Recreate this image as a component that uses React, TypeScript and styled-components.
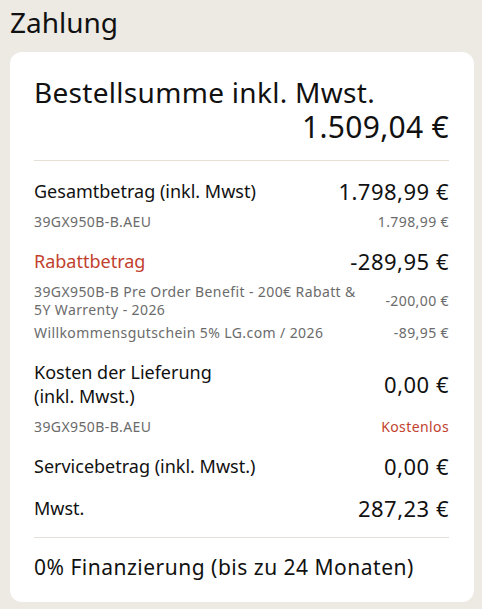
import React from "react";
import styled, { createGlobalStyle } from "styled-components";

const GlobalStyle = createGlobalStyle`
  html, body {
    margin: 0;
    padding: 0;
    background: #edeae4;
  }
  body {
    font-family: "Noto Sans", "Open Sans", sans-serif;
    color: #111;
  }
`;

const Page = styled.div`
  padding: 5px 8px 9px 10px;
`;

const Heading = styled.h2`
  margin: 0 0 13px;
  font-size: 28px;
  line-height: 34px;
  font-weight: 400;
`;

const Card = styled.section`
  background: #fff;
  border-radius: 12px;
  padding: 23px 25px 21px 24px;
`;

const Summary = styled.div`
  display: flex;
  flex-direction: column;
  padding-bottom: 15px;
  border-bottom: 1px solid #e4e0d6;
`;

const SummaryTitle = styled.div`
  font-size: 28px;
  line-height: 34px;
  letter-spacing: 0.3px;
`;

const SummaryTotal = styled.div`
  font-size: 30px;
  line-height: 36px;
  letter-spacing: 0.3px;
  text-align: right;
`;

const Groups = styled.div`
  display: flex;
  flex-direction: column;
  gap: 18px;
  padding: 18px 0 17px;
  border-bottom: 1px solid #e4e0d6;
`;

const Group = styled.div`
  display: flex;
  flex-direction: column;
  gap: 5px;
`;

const MainRow = styled.div<{ $hasSubs: boolean }>`
  display: flex;
  align-items: center;
  justify-content: space-between;
  gap: 16px;
  margin-bottom: ${({ $hasSubs }) => ($hasSubs ? 5 : 0)}px;
`;

const MainLabel = styled.div<{ $accent?: boolean }>`
  font-size: 18px;
  line-height: 24px;
  color: ${({ $accent }) => ($accent ? "#c2412e" : "#111")};
`;

const MainValue = styled.div`
  font-size: 22px;
  line-height: 24px;
  letter-spacing: 0.5px;
  white-space: nowrap;
`;

const SubRow = styled.div`
  display: flex;
  align-items: center;
  justify-content: space-between;
  gap: 12px;
`;

const SubLabel = styled.div`
  font-size: 14px;
  line-height: 18px;
  letter-spacing: 0.4px;
  color: #6b6b6b;
`;

const SubValue = styled.div<{ $accent?: boolean }>`
  font-size: 14px;
  line-height: 18px;
  letter-spacing: 0.4px;
  white-space: nowrap;
  color: ${({ $accent }) => ($accent ? "#c2412e" : "#6b6b6b")};
`;

const Financing = styled.div`
  padding-top: 15px;
  font-size: 21px;
  line-height: 28px;
  letter-spacing: 0.5px;
`;

type Sub = { label: string; value: string; accent?: boolean };
type Line = {
  label: React.ReactNode;
  value: string;
  accent?: boolean;
  subs?: Sub[];
};

const lines: Line[] = [
  {
    label: "Gesamtbetrag (inkl. Mwst)",
    value: "1.798,99 €",
    subs: [{ label: "39GX950B-B.AEU", value: "1.798,99 €" }],
  },
  {
    label: "Rabattbetrag",
    value: "-289,95 €",
    accent: true,
    subs: [
      {
        label: "39GX950B-B Pre Order Benefit - 200€ Rabatt & 5Y Warrenty - 2026",
        value: "-200,00 €",
      },
      { label: "Willkommensgutschein 5% LG.com / 2026", value: "-89,95 €" },
    ],
  },
  {
    label: (
      <>
        Kosten der Lieferung
        <br />
        (inkl. Mwst.)
      </>
    ),
    value: "0,00 €",
    subs: [{ label: "39GX950B-B.AEU", value: "Kostenlos", accent: true }],
  },
  { label: "Servicebetrag (inkl. Mwst.)", value: "0,00 €" },
  { label: "Mwst.", value: "287,23 €" },
];

export default function App() {
  return (
    <>
      <GlobalStyle />
      <Page>
        <Heading>Zahlung</Heading>
        <Card>
          <Summary>
            <SummaryTitle>Bestellsumme inkl. Mwst.</SummaryTitle>
            <SummaryTotal>1.509,04 €</SummaryTotal>
          </Summary>
          <Groups>
            {lines.map((line, i) => (
              <Group key={i}>
                <MainRow $hasSubs={!!line.subs}>
                  <MainLabel $accent={line.accent}>{line.label}</MainLabel>
                  <MainValue>{line.value}</MainValue>
                </MainRow>
                {line.subs?.map((sub, j) => (
                  <SubRow key={j}>
                    <SubLabel>{sub.label}</SubLabel>
                    <SubValue $accent={sub.accent}>{sub.value}</SubValue>
                  </SubRow>
                ))}
              </Group>
            ))}
          </Groups>
          <Financing>0% Finanzierung (bis zu 24 Monaten)</Financing>
        </Card>
      </Page>
    </>
  );
}
